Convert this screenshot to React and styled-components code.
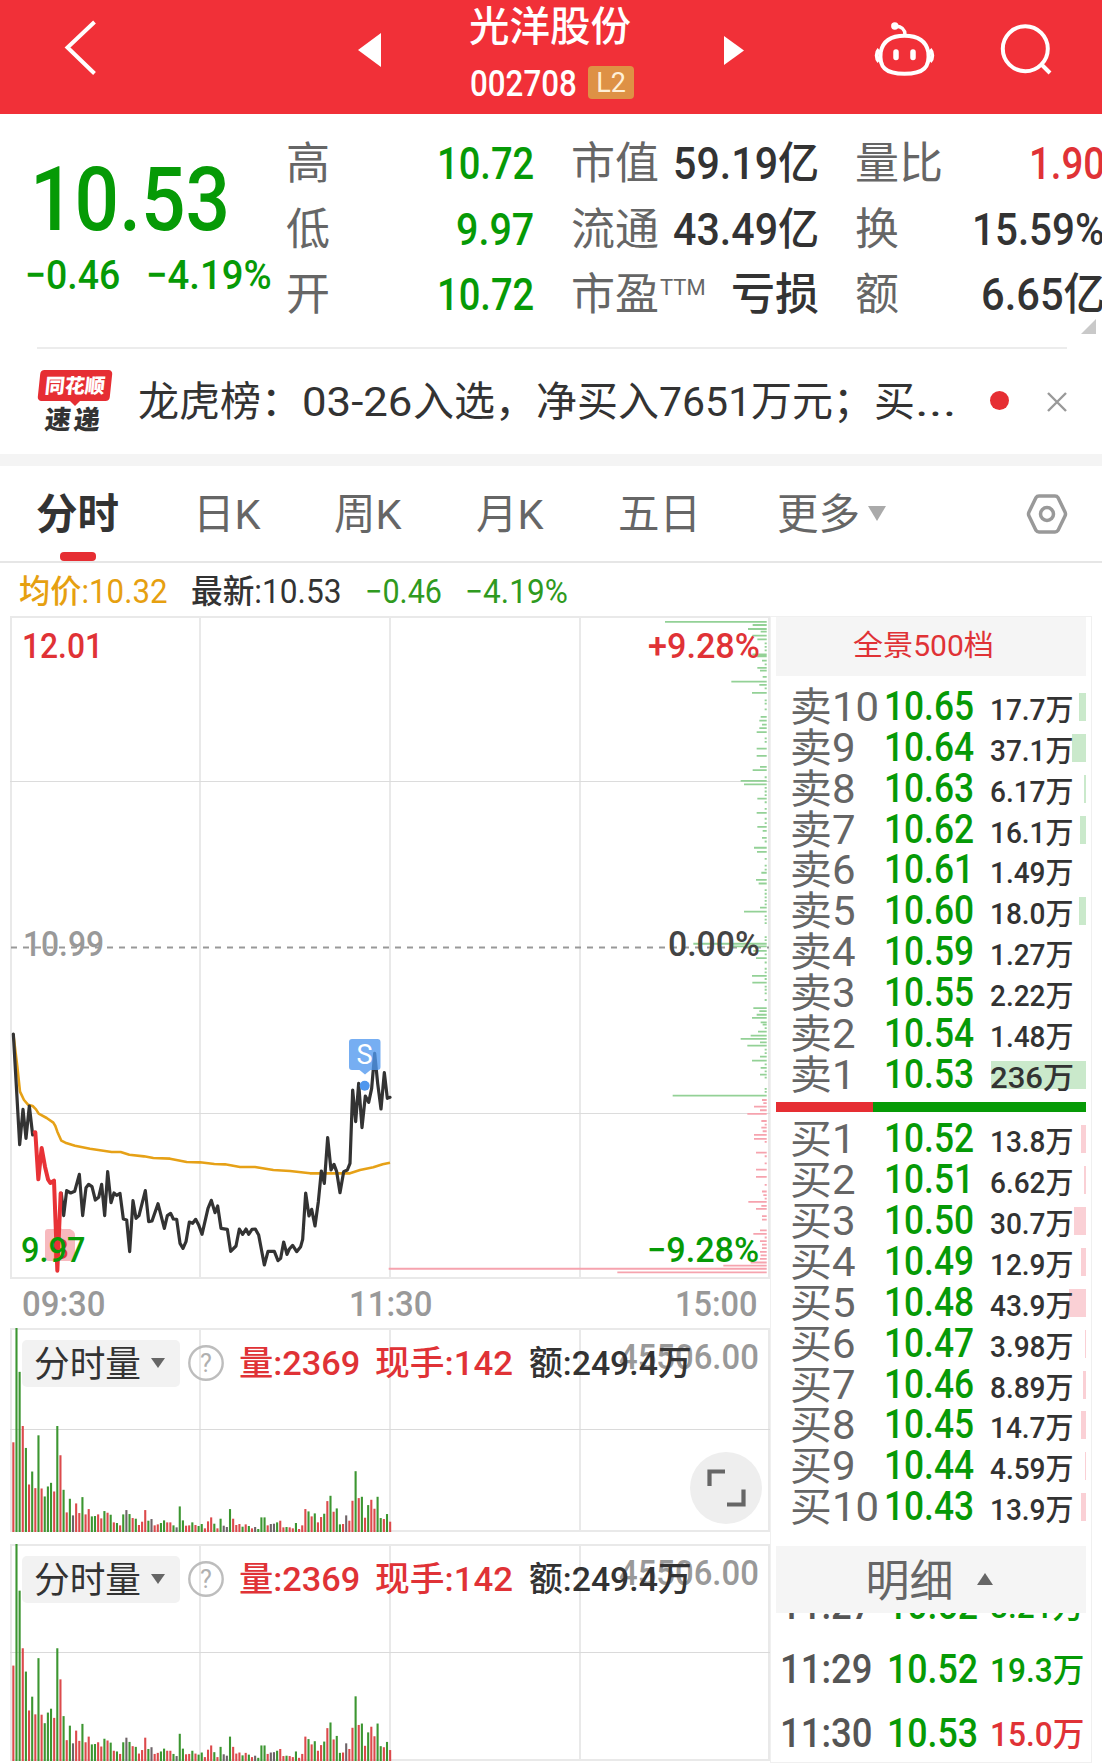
import React, { useLayoutEffect, useRef, useState } from 'react'
import styled, { createGlobalStyle, css } from 'styled-components'

const GREEN = '#069a06'
const RED = '#e03236'
const DARK = '#333333'
const GREY = '#666666'

const GlobalStyle = createGlobalStyle`
  body {
    margin: 0;
    background-color: #ffffff;
    font-family: Roboto, "Noto Sans CJK SC", sans-serif;
    color: #333333;
  }
`

const Page = styled.div`
  width: 1102px;
  height: 1763px;
  overflow: hidden;
  background-color: #ffffff;
`

const FitBox = styled.span`
  display: inline-block;
  flex: none;
  white-space: nowrap;
  ${({ width }) => css`
    width: ${width}px;
  `}
`

const FitInner = styled.span`
  display: inline-block;
  transform-origin: 0 50%;
`

// squeezes a run of text to the condensed width of the quote font
function Fit({ width, children, ...rest }) {
  const ref = useRef(null)
  const [scale, setScale] = useState(1)
  useLayoutEffect(() => {
    setScale(width / ref.current.offsetWidth)
  }, [width, children])
  return (
    <FitBox width={width} {...rest}>
      <FitInner ref={ref} style={{ transform: `scaleX(${scale})` }}>{children}</FitInner>
    </FitBox>
  )
}

/* header */

const Header = styled.header`
  display: grid;
  grid-template-columns: 358px 386px 358px;
  height: 114px;
  background-color: #f13038;
  color: #ffffff;
`

const HeaderSide = styled.div`
  display: flex;
  align-items: flex-start;
  gap: 59px;
  ${({ right }) => css`
    padding-left: ${right ? 130 : 62}px;
  `}
`

const Switcher = styled.div`
  display: flex;
  justify-content: space-between;
`

const Title = styled.div`
  display: flex;
  flex-direction: column;
  width: 170px;
  margin-left: 2px;
`

const StockName = styled.div`
  height: 54px;
  line-height: 54px;
  font-size: 40.5px;
  font-weight: 500;
`

const StockCode = styled.div`
  display: flex;
  align-items: center;
  height: 60px;
  padding-left: 1px;
  font-size: 36px;
  line-height: 60px;
  font-weight: 500;
`

const Level = styled.span`
  width: 46px;
  height: 33px;
  margin-left: 11px;
  border-radius: 4px;
  background-color: #de9145;
  color: #fff0d8;
  font-size: 27px;
  font-weight: 400;
  line-height: 34px;
  text-align: center;
  transform: translateY(-2px);
`

/* quote */

const Quote = styled.section`
  display: grid;
  grid-template-columns: 286px 248px 37px 248px 36px 250px;
  position: relative;
  height: 233px;
`

const Latest = styled.div`
  padding: 33px 0 0 25px;
  color: ${GREEN};
  font-weight: 500;
`

const BigPrice = styled.div`
  height: 105px;
  padding-left: 5px;
  font-size: 89px;
  line-height: 105px;
`

const Change = styled.div`
  display: flex;
  gap: 26px;
  height: 46px;
  font-size: 41px;
  line-height: 46px;
`

const Facts = styled.div`
  padding-top: 18px;
  ${({ col }) => css`
    grid-column: ${col};
  `}
`

const Fact = styled.div`
  display: flex;
  justify-content: space-between;
  height: 65.5px;
  font-size: 44px;
  line-height: 65.5px;
`

const FactName = styled.span`
  color: ${GREY};
  sup {
    display: inline-block;
    font-size: 22px;
    line-height: 1;
    vertical-align: 15px;
    margin-left: 1px;
  }
`

const FactValue = styled.span`
  font-weight: 500;
  color: ${({ color }) => color};
`

const Corner = styled.svg`
  position: absolute;
  left: 1081px;
  bottom: 13px;
`

/* news */

const News = styled.section`
  display: flex;
  align-items: center;
  height: 105px;
  margin: 0 35px 0 37px;
  border-top: 2px solid #ececec;
  font-size: 41px;
  line-height: 60px;
`

const Brand = styled.div`
  width: 75px;
  height: 64px;
  margin-right: 26px;
  display: flex;
  flex-direction: column;
  align-items: center;
`

const BrandTop = styled.div`
  width: 72px;
  height: 31px;
  border-radius: 4px;
  background-color: #e62e33;
  color: #ffffff;
  font-size: 20px;
  font-weight: 900;
  line-height: 33px;
  text-align: center;
  transform: skewX(-6deg);
`

const BrandTail = styled.div`
  border: 5px solid transparent;
  border-top-color: #e62e33;
  border-bottom: 0;
`

const BrandBottom = styled.div`
  color: #333333;
  font-size: 26px;
  font-weight: 900;
  line-height: 28px;
  letter-spacing: 3px;
  transform: skewX(-6deg);
`

const NewsText = styled.div`
  flex: 1;
  display: flex;
  white-space: nowrap;
`

const Dot = styled.div`
  width: 19px;
  height: 19px;
  margin-right: 38px;
  border-radius: 50%;
  background-color: #e62e33;
  transform: translateY(-1px);
`

/* tabs */

const Tabs = styled.nav`
  display: flex;
  align-items: center;
  height: 95px;
  padding: 0 34px 0 36px;
  border-top: 12px solid #f4f4f4;
  border-bottom: 2px solid #e6e6e6;
  font-size: 41.5px;
  line-height: 98px;
  color: ${GREY};
`

const Tab = styled.div`
  position: relative;
  height: 95px;
  white-space: nowrap;
  ${({ width }) => css`
    width: ${width}px;
  `}
  ${({ active }) => active && css`
    color: #333333;
    font-weight: 700;
    &::after {
      content: '';
      position: absolute;
      left: 24px;
      bottom: 0;
      width: 36px;
      height: 9px;
      border-radius: 4px;
      background-color: #e62e33;
    }
  `}
`

const Caret = styled.span`
  display: inline-block;
  border: ${({ size }) => size}px solid transparent;
  ${({ up, size, tall, color }) => (up ? css`
    border-top: 0;
    border-bottom: ${tall || size}px solid ${color};
  ` : css`
    border-bottom: 0;
    border-top: ${tall || size}px solid ${color};
  `)}
`

const Legend = styled.div`
  display: flex;
  height: 53px;
  padding-left: 19px;
  font-size: 32.5px;
  line-height: 59px;
  font-weight: 450;
`

const LegendItem = styled.span`
  margin-right: ${({ gap }) => gap}px;
  color: ${({ color }) => color};
`

/* charts */

const Body = styled.main`
  display: grid;
  grid-template-columns: 770px 322px;
  height: 1147px;
`

const Charts = styled.div`
  display: flex;
  flex-direction: column;
`

const Panel = styled.div`
  position: relative;
  margin-bottom: ${({ gap }) => gap || 0}px;
  ${({ height }) => css`
    height: ${height}px;
  `}
  > svg {
    display: block;
  }
`

const Mark = styled.span`
  position: absolute;
  font-size: 34.5px;
  line-height: 36px;
  font-weight: 500;
  color: ${({ color }) => color};
  ${({ x, y }) => css`
    left: ${x}px;
    top: ${y}px;
  `}
`

const Times = styled.div`
  display: flex;
  justify-content: space-between;
  height: 49px;
  padding: 0 12px 0 22px;
  color: #999999;
  font-size: 34.5px;
  font-weight: 500;
  line-height: 50px;
`

const VolumeBar = styled.div`
  position: absolute;
  left: 22px;
  top: 12px;
  display: flex;
  align-items: center;
  height: 46px;
  font-size: 34px;
  line-height: 46px;
  font-weight: 500;
`

const Picker = styled.div`
  display: flex;
  align-items: center;
  justify-content: space-between;
  width: 131px;
  height: 47px;
  padding: 0 15px 0 12px;
  margin-right: 8px;
  border-radius: 5px;
  background-color: #f2f2f2;
  font-size: 36px;
  font-weight: 400;
`

const PickerText = styled.span`
  padding-top: 4px;
`

const VolumeItem = styled.span`
  margin-left: ${({ gap }) => gap}px;
  color: ${({ color }) => color};
`

const Expand = styled.svg`
  position: absolute;
  left: 690px;
  top: 124px;
`

/* order book */

const Book = styled.aside`
  display: flex;
  flex-direction: column;
  box-sizing: border-box;
  padding: 0 5px;
  border: 1px solid #f0f0f0;
  overflow: hidden;
`

const BookHead = styled.div`
  flex: none;
  display: flex;
  align-items: center;
  justify-content: center;
  background-color: #f5f5f5;
  ${({ detail }) => (detail ? css`
    height: 67px;
    margin-top: 19px;
    padding-right: 4px;
    gap: 23px;
    font-size: 44px;
    line-height: 60px;
    color: #666666;
  ` : css`
    height: 59px;
    padding-right: 16px;
    font-size: 29px;
    line-height: 57px;
    color: #e03236;
    margin-bottom: 10px;
  `)}
`

const BookHeadText = styled.span`
  padding-top: 6px;
`

const Order = styled.div`
  flex: none;
  position: relative;
  display: grid;
  grid-template-columns: 94px 91px 112px;
  padding-left: 14px;
  height: 40.85px;
  line-height: 40.85px;
`

const OrderName = styled.span`
  color: ${GREY};
  font-size: 40px;
  line-height: 43px;
`

const OrderPrice = styled.span`
  font-size: 40px;
  line-height: 42.5px;
  font-weight: 500;
  color: ${GREEN};
`

const OrderQty = styled.span`
  position: relative;
  justify-self: end;
  margin-right: 13px;
  font-size: 30px;
  line-height: 48px;
  font-weight: 500;
`

const DepthBar = styled.span`
  position: absolute;
  right: 0;
  top: 7px;
  height: 28px;
  background-color: ${({ side }) => (side === 'sell' ? '#cae9cb' : '#fad0d5')};
`

const Balance = styled.div`
  flex: none;
  height: 10px;
  margin: 8px 0 6px;
  background: linear-gradient(to right, #e62e33 97px, #069a06 97px);
`

const Trades = styled.div`
  height: 147px;
  overflow: hidden;
`

const TradeList = styled.div`
  margin-top: -39px;
`

const Trade = styled.div`
  display: grid;
  grid-template-columns: 107px 103px 96px;
  padding-left: 4px;
  height: 64px;
  line-height: 64px;
  font-size: 40px;
  font-weight: 500;
  color: #555555;
`

const TradeQty = styled.span`
  font-size: 33px;
  line-height: 66px;
  color: ${({ color }) => color};
`

const BLACK_LINE = [
  [40, 42], [50, 215], [59, 374], [69, 268], [78, 355], [88, 258], [98, 345], [104, 340],
]

const RED_LINE = [
  [104, 337], [106, 337], [115, 478], [125, 384], [135, 440], [144, 478], [151, 489], [162, 482],
  [172, 752], [182, 520],
]

const MAIN_LINE = [
  [184, 520], [191, 587], [200, 512], [212, 519], [224, 514], [238, 463], [248, 587], [258, 503],
  [266, 493], [276, 500], [286, 540], [296, 532], [305, 493], [314, 587], [323, 455], [333, 548],
  [342, 519], [350, 526], [360, 520], [370, 597], [380, 600], [389, 695], [399, 542], [408, 595],
  [417, 587], [436, 512], [446, 605], [456, 603], [474, 551], [493, 625], [502, 587], [512, 580],
  [520, 597], [530, 598], [540, 670], [549, 685], [558, 665], [568, 606], [578, 610], [587, 598],
  [596, 615], [606, 643], [624, 565], [634, 541], [645, 578], [653, 558], [663, 625], [682, 628],
  [692, 694], [708, 678], [718, 627], [728, 643], [738, 627], [746, 643], [756, 628], [766, 627],
  [776, 645], [793, 735], [804, 694], [823, 694], [834, 722], [842, 715], [851, 666], [861, 703],
  [868, 687], [878, 676], [890, 695], [902, 680], [908, 658], [917, 519], [927, 588], [935, 568],
  [945, 618], [955, 545], [964, 453], [973, 490], [983, 353], [993, 450], [1002, 433], [1010, 455],
  [1020, 518], [1031, 455], [1042, 450], [1050, 430], [1058, 210], [1067, 305], [1076, 190],
  [1086, 323], [1096, 228], [1106, 247], [1115, 205], [1124, 100], [1133, 190], [1143, 267],
  [1153, 158], [1162, 235], [1170, 232],
]

const AVG_LINE = [
  [40, 42], [52, 140], [60, 215], [72, 240], [84, 254], [98, 258], [108, 268], [116, 281],
  [140, 294], [160, 308], [166, 318], [172, 335], [184, 362], [196, 368], [225, 377], [270, 386],
  [335, 396], [362, 396], [388, 404], [432, 409], [460, 414], [510, 416], [560, 426], [600, 427],
  [643, 432], [675, 433], [720, 441], [765, 441], [820, 450], [870, 453], [930, 460], [1050, 460],
  [1080, 450], [1120, 442], [1148, 433], [1170, 428],
]

const toPoints = list => list.map(([x, y]) => `${x / 3},${404 + y / 3}`).join(' ')

// [y, left end] of every resting order bar, in thirds of a pixel across
const SELL_DEPTH = [
  [49, 855], [56, 1118], [65, 1104], [71, 1142], [80, 1117], [88, 1132], [122, 1117], [126, 1130],
  [136, 1146], [152, 1132], [158, 1140], [172, 1148], [183, 1054], [190, 1138], [208, 1116],
  [262, 1142], [270, 1138], [279, 1146], [287, 1138], [296, 1130], [333, 1130], [349, 1130],
  [374, 1140], [381, 1118], [405, 1082], [413, 1092], [445, 1132], [477, 1130], [508, 1132],
  [517, 1148], [533, 1146], [555, 1122], [564, 1131], [611, 1144], [627, 1128], [635, 1136],
  [689, 1140], [698, 1092], [770, 940], [776, 1050], [786, 1120], [802, 1128], [842, 1116],
  [857, 1117], [914, 1120], [921, 1138], [929, 1130], [936, 1116], [946, 1142], [951, 1148],
  [967, 1134], [976, 1112], [983, 1082], [991, 1140], [998, 1102], [1023, 1140], [1032, 1116],
  [1048, 1142], [1063, 1140], [1110, 878],
]

const SELL_STUBS = [
  97, 105, 113, 144, 198, 225, 232, 245, 310, 318, 397, 421, 429, 437, 453, 468, 490, 500, 541,
  580, 595, 604, 650, 658, 666, 674, 682, 708, 716, 724, 755, 762, 794, 812, 826, 834, 849, 866,
  873, 881, 896, 959, 1007, 1015, 1040, 1056, 1070, 1095, 1102,
]

const BUY_DEPTH = [
  [1120, 1146], [1127, 1150], [1135, 1122], [1143, 1140], [1151, 1102], [1167, 1144], [1175, 1154],
  [1182, 1144], [1190, 1148], [1198, 1122], [1207, 1122], [1214, 1154], [1238, 1128], [1246, 1154],
  [1262, 1154], [1276, 1128], [1292, 1128], [1310, 1154], [1325, 1146], [1333, 1150], [1341, 1154],
  [1348, 1105], [1357, 1144], [1364, 1128], [1380, 1146], [1388, 1146], [1412, 1140], [1420, 1120],
  [1428, 1154], [1436, 1140], [1444, 1146], [1452, 1146], [1460, 1140], [1468, 1142], [1476, 1140],
  [1484, 1112], [1491, 1030], [1498, 26], [1506, 712],
]

const depthPath = list => list
  .map(([y, left]) => `M${380 + left / 3} ${y / 2.24 - 16}H766.7`)
  .join('')

const VOLUME = `270r 614g 482g 319r 253g 143r 182g 132r 291g 131r 107g 137g 148g 122r 319g 231r 127g
  59r 100g 50k 86r 57r 105g 53r 69r 47g 48g 53r 41r 63g 58r 52g 29r 27g 20r 53g 66k 54g 42r 40g 21r
  31r 66r 34g 39k 20r 23r 27g 35g 29r 29r 20g 14k 77g 35g 19r 20r 29g 21r 18g 24g 11r 32r 44r 25g
  11r 40g 19k 15k 69g 40r 21r 24r 16g 23r 18g 11r 15k 9g 44g 44g 20r 24k 25k 29g 34r 14r 15g 14r
  11r 27g 9r 20r 69r 62g 47r 56g 29r 45r 55g 93r 109g 61r 71g 23g 24r 50k 34r 94r 183g 102r 106g
  43r 81g 97r 70r 106g 42g 39r 54g 31r`
  .split(/\s+/)
  .map(item => ({ size: parseInt(item, 10) / 614, kind: item.slice(-1) }))

const VOLUME_COLORS = { r: '#dc4a4c', g: '#3c9631', k: '#6e6468' }

const SELLS = [
  ['卖10', '10.65', '17.7万', 7],
  ['卖9', '10.64', '37.1万', 14],
  ['卖8', '10.63', '6.17万', 2],
  ['卖7', '10.62', '16.1万', 6],
  ['卖6', '10.61', '1.49万', 0],
  ['卖5', '10.60', '18.0万', 7],
  ['卖4', '10.59', '1.27万', 0],
  ['卖3', '10.55', '2.22万', 0],
  ['卖2', '10.54', '1.48万', 0],
  ['卖1', '10.53', '236万', 95],
]

const BUYS = [
  ['买1', '10.52', '13.8万', 5],
  ['买2', '10.51', '6.62万', 2],
  ['买3', '10.50', '30.7万', 12],
  ['买4', '10.49', '12.9万', 5],
  ['买5', '10.48', '43.9万', 17],
  ['买6', '10.47', '3.98万', 1],
  ['买7', '10.46', '8.89万', 3],
  ['买8', '10.45', '14.7万', 5],
  ['买9', '10.44', '4.59万', 1],
  ['买10', '10.43', '13.9万', 5],
]

const TRADES = [
  ['11:27', '10.52', '8.21万', GREEN],
  ['11:29', '10.52', '19.3万', GREEN],
  ['11:30', '10.53', '15.0万', RED],
]

function Orders({ rows, side }) {
  return rows.map(([name, price, qty, bar]) => (
    <Order key={name}>
      <DepthBar side={side} style={{ width: bar }} />
      <OrderName><Fit width={name.length > 2 ? 89 : 65}>{name}</Fit></OrderName>
      <OrderPrice><Fit width={90}>{price}</Fit></OrderPrice>
      <OrderQty><Fit width={84}>{qty}</Fit></OrderQty>
    </Order>
  ))
}

function PriceChart() {
  return (
    <Panel height={663}>
      <svg width="770" height="664" fill="none">
        <g stroke="#e9e9e9" strokeWidth="2">
          <path d="M11 0V663M200 0V663M390 0V663M580 0V663M769 0V663" />
          <path d="M10 1H770M10 662H770" />
          <path d="M10 165.5H770M10 497.5H770" strokeWidth="1" stroke="#dcdcdc" />
        </g>
        <path d="M11 331.5H769" stroke="#999999" strokeWidth="2" strokeDasharray="6 6" />
        <path d={depthPath([...SELL_DEPTH, ...SELL_STUBS.map(y => [y, 1154])])} stroke="#93d196" strokeWidth="1.8" />
        <path d={depthPath(BUY_DEPTH)} stroke="#f6a3ae" strokeWidth="1.8" />
        <polyline points={toPoints(AVG_LINE)} stroke="#e6a117" strokeWidth="2.6" strokeLinejoin="round" />
        <path d="M45 616q0 -3 3 -3h6l4 -3l4 3h8q5 2 5 6v22q0 4 -4 4h-22q-4 0 -4 -4z" fill="#f7b9be" />
        <text x="52" y="643" fontSize="27" fill="#e2383c">B</text>
        <g strokeWidth="3.2" strokeLinejoin="round" strokeLinecap="round">
          <polyline points={toPoints(BLACK_LINE)} stroke="#333333" />
          <polyline points={toPoints(MAIN_LINE)} stroke="#333333" />
          <polyline points={toPoints(RED_LINE)} stroke="#e83236" strokeWidth="4" />
        </g>
        <g fill="#4f97ee">
          <path fillOpacity="0.78" d="M352 423h25.500q3 0 3 3v25q0 3 -3 3h-7l-5.500 4.500l-5.500 -4.500h-7.500q-3 0 -3 -3v-25q0 -3 3 -3z" />
          <circle cx="364.700" cy="469.800" r="5" />
        </g>
        <text x="364.500" y="447.500" fontSize="27" fill="#ffffff" textAnchor="middle">S</text>
      </svg>
      <Mark x={22} y={12} color={RED}><Fit width={81}>12.01</Fit></Mark>
      <Mark x={23} y={309.5} color="#999999"><Fit width={81}>10.99</Fit></Mark>
      <Mark x={21} y={615.5} color={GREEN}><Fit width={64}>9.97</Fit></Mark>
      <Mark x={648} y={12} color={RED}><Fit width={112}>+9.28%</Fit></Mark>
      <Mark x={668} y={309.5} color="#444444"><Fit width={92}>0.00%</Fit></Mark>
      <Mark x={647} y={615.5} color={GREEN}><Fit width={112}>−9.28%</Fit></Mark>
    </Panel>
  )
}

function VolumeChart({ height, middle, gap, expandable }) {
  return (
    <Panel height={height} gap={gap}>
      <svg width="770" height={height} fill="none">
        <path
          stroke="#e9e9e9"
          strokeWidth="2"
          d={`M11 0V${height}M200 0V${height}M390 0V${height}M580 0V${height}M769 0V${height}M10 1H770M10 ${height - 1}H770`}
        />
        <path d={`M10 ${middle}H770`} stroke="#dadada" />
        {VOLUME.map(({ size, kind }, i) => {
          const h = size * height
          return (
            <rect key={i} x={12.3 + i * 3.14} y={height - h} width="2.1" height={h} fill={VOLUME_COLORS[kind]} />
          )
        })}
      </svg>
      <Mark x={619} y={11} color="#999999"><Fit width={140}>45506.00</Fit></Mark>
      <VolumeBar>
        <Picker>
          <PickerText><Fit width={107}>分时量</Fit></PickerText>
          <Caret size={7.5} tall={10} color="#666666" />
        </Picker>
        <svg width="36" height="36" fill="none">
          <circle cx="18" cy="18" r="16.700" stroke="#bdbdbd" strokeWidth="2.400" />
          <text x="18" y="26.500" fontSize="25" fontWeight="400" fill="#b0b0b0" textAnchor="middle">?</text>
        </svg>
        <VolumeItem gap={15} color={RED}><Fit width={121}>量:2369</Fit></VolumeItem>
        <VolumeItem gap={15} color={RED}><Fit width={138}>现手:142</Fit></VolumeItem>
        <VolumeItem gap={16} color={DARK}><Fit width={163}>额:249.4万</Fit></VolumeItem>
      </VolumeBar>
      {expandable && (
        <Expand width="72" height="72" fill="none">
          <circle cx="36" cy="36" r="36" fill="#eeeeee" />
          <path d="M19.500 34V19.500H35M37 52.500H53.500V37.500" stroke="#666666" strokeWidth="4.200" />
        </Expand>
      )}
    </Panel>
  )
}

export default function App() {
  return (
    <Page>
      <GlobalStyle />
      <Header>
        <HeaderSide>
          <svg width="40" height="90" fill="none">
            <path d="M32.500 22L5.500 47.500L32.500 73.500" stroke="#ffffff" strokeWidth="4" />
          </svg>
        </HeaderSide>
        <Switcher>
          <svg width="24" height="100"><path d="M0 50L23 33V67Z" fill="#ffffff" /></svg>
          <Title>
            <StockName>光洋股份</StockName>
            <StockCode><Fit width={107}>002708</Fit><Level>L2</Level></StockCode>
          </Title>
          <svg width="20" height="100"><path d="M20 50.500L0 36V65Z" fill="#ffffff" /></svg>
        </Switcher>
        <HeaderSide right>
          <svg width="64" height="90" fill="none" stroke="#ffffff" strokeWidth="4">
            <path d="M30.500 35.700C43 35.700 52 40 54.300 52C56 67 50 73.800 30.500 73.800S5 67 6.700 52C9 40 18 35.700 30.500 35.700Z" />
            <path d="M31 35c0 -6 -3 -8.500 -9.500 -9" strokeWidth="3.500" />
            <circle cx="20.800" cy="26" r="3.700" fill="#ffffff" stroke="none" />
            <path d="M5 49.500c-3 3 -3 9 0 12M56 49.500c3 3 3 9 0 12" strokeWidth="4" />
            <path d="M22 52V57.500M39 52V57.500" strokeWidth="5.500" strokeLinecap="round" />
          </svg>
          <svg width="64" height="90" fill="none" stroke="#ffffff" strokeWidth="4">
            <circle cx="28.300" cy="48.700" r="22.500" />
            <path d="M44.500 64.500L53 73" />
          </svg>
        </HeaderSide>
      </Header>

      <Quote>
        <Latest>
          <BigPrice><Fit width={200}>10.53</Fit></BigPrice>
          <Change><Fit width={95}>−0.46</Fit><Fit width={126}>−4.19%</Fit></Change>
        </Latest>
        <Facts col={2}>
          <Fact><FactName>高</FactName><FactValue color={GREEN}><Fit width={97}>10.72</Fit></FactValue></Fact>
          <Fact><FactName>低</FactName><FactValue color={GREEN}><Fit width={78}>9.97</Fit></FactValue></Fact>
          <Fact><FactName>开</FactName><FactValue color={GREEN}><Fit width={97}>10.72</Fit></FactValue></Fact>
        </Facts>
        <Facts col={4}>
          <Fact><FactName>市值</FactName><FactValue><Fit width={146}>59.19亿</Fit></FactValue></Fact>
          <Fact><FactName>流通</FactName><FactValue><Fit width={146}>43.49亿</Fit></FactValue></Fact>
          <Fact><FactName>市盈<sup>TTM</sup></FactName><FactValue>亏损</FactValue></Fact>
        </Facts>
        <Facts col={6}>
          <Fact><FactName>量比</FactName><FactValue color={RED}><Fit width={76}>1.90</Fit></FactValue></Fact>
          <Fact><FactName>换</FactName><FactValue><Fit width={133}>15.59%</Fit></FactValue></Fact>
          <Fact><FactName>额</FactName><FactValue><Fit width={124}>6.65亿</Fit></FactValue></Fact>
        </Facts>
        <Corner width="15" height="15"><path d="M0 15L15 0V15Z" fill="#c9c9c9" /></Corner>
      </Quote>

      <News>
        <Brand>
          <BrandTop>同花顺</BrandTop>
          <BrandTail />
          <BrandBottom>速递</BrandBottom>
        </Brand>
        <NewsText>
          龙虎榜：<Fit width={111}>03-26</Fit>入选，净买入<Fit width={92}>7651</Fit>万元；买<Fit width={41}>...</Fit>
        </NewsText>
        <Dot />
        <svg width="20" height="20" fill="none">
          <path d="M1 1L19 19M19 1L1 19" stroke="#999999" strokeWidth="2.400" />
        </svg>
      </News>

      <Tabs>
        <Tab width={157} active>分时</Tab>
        <Tab width={141}>日K</Tab>
        <Tab width={142}>周K</Tab>
        <Tab width={142}>月K</Tab>
        <Tab width={159}>五日</Tab>
        <Tab width={249}>
          更多<Caret size={9} tall={15} color="#aaaaaa" style={{ marginLeft: 8, verticalAlign: 8 }} />
        </Tab>
        <svg width="42" height="42" fill="none" stroke="#999999" strokeWidth="3.500">
          <path d="M13 3H29Q31 3 32 4.600L39 19Q40 21 39 23L32 37.400Q31 39 29 39H13Q11 39 10 37.400L3 23Q2 21 3 19L10 4.600Q11 3 13 3Z" />
          <circle cx="21" cy="21" r="6.500" />
        </svg>
      </Tabs>

      <Legend>
        <LegendItem gap={23} color="#e6a010"><Fit width={149}>均价:10.32</Fit></LegendItem>
        <LegendItem gap={23} color={DARK}><Fit width={151}>最新:10.53</Fit></LegendItem>
        <LegendItem gap={23} color="#2f9a20"><Fit width={77}>−0.46</Fit></LegendItem>
        <LegendItem gap={0} color="#2f9a20"><Fit width={103}>−4.19%</Fit></LegendItem>
      </Legend>

      <Body>
        <Charts>
          <PriceChart />
          <Times>
            <Fit width={84}>09:30</Fit>
            <Fit width={84}>11:30</Fit>
            <Fit width={83}>15:00</Fit>
          </Times>
          <VolumeChart height={204} middle={101.5} gap={12} expandable />
          <VolumeChart height={217} middle={108.5} />
        </Charts>
        <Book>
          <BookHead><Fit width={141}>全景500档</Fit></BookHead>
          <Orders rows={SELLS} side="sell" />
          <Balance />
          <Orders rows={BUYS} side="buy" />
          <BookHead detail>
            <BookHeadText>明细</BookHeadText>
            <Caret up size={8.5} tall={12} color="#666666" />
          </BookHead>
          <Trades>
            <TradeList>
              {TRADES.map(([time, price, qty, color]) => (
                <Trade key={time}>
                  <Fit width={92}>{time}</Fit>
                  <Fit width={91} style={{ color: GREEN }}>{price}</Fit>
                  <TradeQty color={color}><Fit width={94}>{qty}</Fit></TradeQty>
                </Trade>
              ))}
            </TradeList>
          </Trades>
        </Book>
      </Body>
    </Page>
  )
}
